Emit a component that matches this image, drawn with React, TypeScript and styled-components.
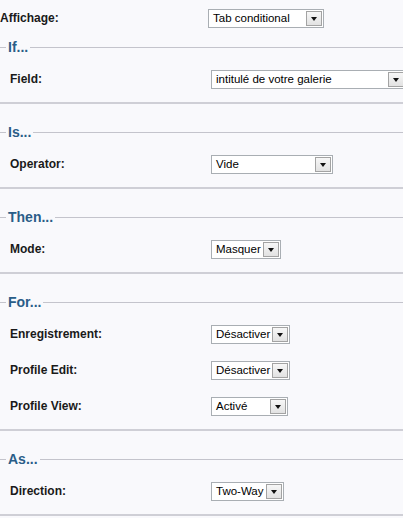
import React from 'react';
import styled, { createGlobalStyle } from 'styled-components';

const GlobalStyle = createGlobalStyle`
    html, body {
        margin: 0;
        padding: 0;
        background: #f9f9fc;
    }
    body {
        font-family: 'Liberation Sans', Arial, sans-serif;
        color: #111;
        overflow: hidden;
    }
`;

const Page = styled.div`
    width: 403px;
    overflow: hidden;
`;

const TopRow = styled.div`
    display: grid;
    grid-template-columns: 208px 1fr;
    align-items: center;
    height: 36px;
    margin-bottom: 3px;
`;

const Section = styled.div`
    padding-bottom: 5px;
    border-bottom: 2px solid #cfcfd6;
    & + & {
        margin-top: 20px;
    }
`;

const Legend = styled.div`
    display: flex;
    align-items: center;
    height: 16px;
    &::before {
        content: '';
        width: 6px;
        height: 1px;
        background: #c4c4cc;
        margin-right: 2px;
    }
    &::after {
        content: '';
        flex: 1;
        height: 1px;
        background: #c4c4cc;
        margin-left: 2px;
    }
`;

const LegendText = styled.span`
    font-size: 14px;
    font-weight: bold;
    color: #2a5d88;
    line-height: 16px;
`;

const Rows = styled.div`
    padding-top: 6px;
    padding-left: 10px;
`;

const Row = styled.div`
    display: grid;
    grid-template-columns: 201px 1fr;
    align-items: center;
    height: 36px;
`;

const Label = styled.label`
    font-size: 12px;
    font-weight: bold;
    color: #1a1a1a;
    white-space: nowrap;
`;

const SelectBox = styled.div<{ $width: number }>`
    display: flex;
    align-items: center;
    justify-content: space-between;
    box-sizing: border-box;
    min-width: ${(p) => p.$width}px;
    width: max-content;
    height: 19px;
    border: 1px solid #a9aeb3;
    background: #fff;
    padding: 0 1px 0 4px;
`;

const SelectText = styled.span`
    font-size: 11.5px;
    color: #000;
    white-space: nowrap;
`;

const ArrowButton = styled.span`
    display: flex;
    align-items: center;
    justify-content: center;
    flex-shrink: 0;
    box-sizing: border-box;
    width: 16px;
    height: 15px;
    margin-left: 2px;
    border: 1px solid #a3a3a3;
    background: linear-gradient(#f7f7f7, #e2e2e2);
    &::after {
        content: '';
        border-left: 3.5px solid transparent;
        border-right: 3.5px solid transparent;
        border-top: 4px solid #111;
        margin-top: 2px;
    }
`;

const Select = ({ value, width }: { value: string; width: number }) => (
    <SelectBox $width={width}>
        <SelectText>{value}</SelectText>
        <ArrowButton />
    </SelectBox>
);

type Field = { label: string; value: string; width: number };

const sections: { title: string; fields: Field[] }[] = [
    { title: 'If...', fields: [{ label: 'Field:', value: 'intitulé de votre galerie', width: 195 }] },
    { title: 'Is...', fields: [{ label: 'Operator:', value: 'Vide', width: 122 }] },
    { title: 'Then...', fields: [{ label: 'Mode:', value: 'Masquer', width: 68 }] },
    {
        title: 'For...',
        fields: [
            { label: 'Enregistrement:', value: 'Désactiver', width: 77 },
            { label: 'Profile Edit:', value: 'Désactiver', width: 77 },
            { label: 'Profile View:', value: 'Activé', width: 77 },
        ],
    },
    { title: 'As...', fields: [{ label: 'Direction:', value: 'Two-Way', width: 73 }] },
];

const App = () => {
    return (
        <Page>
            <GlobalStyle />
            <TopRow>
                <Label>Affichage:</Label>
                <Select value="Tab conditional" width={116} />
            </TopRow>
            {sections.map((section) => (
                <Section key={section.title}>
                    <Legend>
                        <LegendText>{section.title}</LegendText>
                    </Legend>
                    <Rows>
                        {section.fields.map((field) => (
                            <Row key={field.label}>
                                <Label>{field.label}</Label>
                                <Select value={field.value} width={field.width} />
                            </Row>
                        ))}
                    </Rows>
                </Section>
            ))}
        </Page>
    );
};

export default App;
